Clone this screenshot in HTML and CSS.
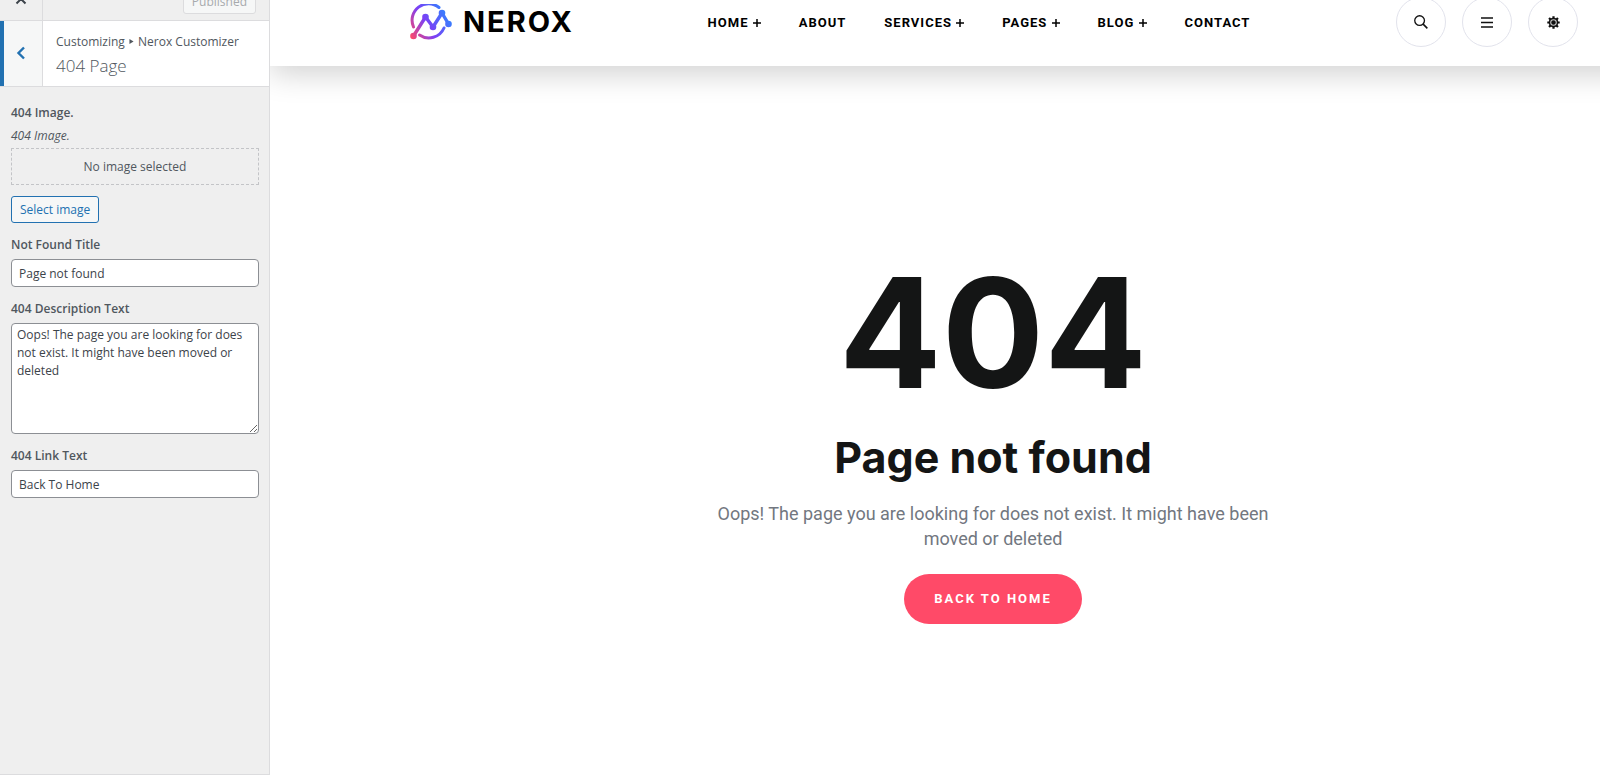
FILE: index.html
```html
<!DOCTYPE html>
<html lang="en">
<head>
<meta charset="utf-8">
<title>Customize: 404 Page</title>
<link rel="stylesheet" href="styles.css">
</head>
<body>
<div class="app">
  <aside class="controls">
    <div class="topbar">
      <button class="close" aria-label="Close">
        <svg width="12" height="12" viewBox="0 0 12 12"><path d="M1.500 1.500l9 9M10.500 1.500l-9 9" stroke="currentColor" stroke-width="2"/></svg>
      </button>
      <button class="published" disabled>Published</button>
    </div>
    <div class="section-head">
      <button class="back" aria-label="Back">
        <svg width="10" height="14" viewBox="0 0 10 14"><path d="M8 1.500L2.500 7 8 12.500" fill="none" stroke="currentColor" stroke-width="2.400"/></svg>
      </button>
      <div class="section-title">
        <span class="crumbs">Customizing
          <svg class="crumb-arrow" width="5" height="5" viewBox="0 0 5 6"><path d="M0 0l5 3-5 3z" fill="currentColor"/></svg>
          Nerox Customizer</span>
        <h1 class="section-name">404 Page</h1>
      </div>
    </div>
    <form class="fields">
      <div class="field">
        <span class="label">404 Image.</span>
        <span class="hint">404 Image.</span>
        <div class="placeholder">No image selected</div>
        <button type="button" class="select-image">Select image</button>
      </div>
      <div class="field">
        <label class="label" for="nf-title">Not Found Title</label>
        <input class="input" id="nf-title" type="text" value="Page not found">
      </div>
      <div class="field">
        <label class="label" for="nf-text">404 Description Text</label>
        <textarea class="input area" id="nf-text">Oops! The page you are looking for does not exist. It might have been moved or deleted</textarea>
      </div>
      <div class="field">
        <label class="label" for="nf-link">404 Link Text</label>
        <input class="input" id="nf-link" type="text" value="Back To Home">
      </div>
    </form>
    <div class="footer"></div>
  </aside>
  <div class="preview">
    <header class="site-header">
      <a class="logo" href="#">
        <svg width="42" height="36" viewBox="0 0 42 36">
          <defs><linearGradient id="g" gradientUnits="userSpaceOnUse" x1="1" y1="34" x2="40" y2="10"><stop offset="0" stop-color="#ff4968"/><stop offset=".45" stop-color="#7c3ff5"/><stop offset="1" stop-color="#2f86ff"/></linearGradient></defs>
          <g fill="none" stroke="url(#g)" stroke-width="3" stroke-linecap="round" stroke-linejoin="round">
            <path d="M3.500 23A16.500 16.500 0 0 1 29 3.500"/>
            <path d="M9.500 31A16.500 16.500 0 0 0 34 24"/>
            <path d="M3.500 32L15.500 13 23 23 32 9 38.500 20" stroke-width="3.400"/>
          </g>
          <g fill="url(#g)"><circle cx="3.500" cy="32" r="3.300"/><circle cx="15.500" cy="13" r="3.300"/><circle cx="23" cy="23" r="3.300"/><circle cx="32" cy="9" r="3.300"/><circle cx="38.500" cy="20" r="3.300"/></g>
        </svg>
        <span class="brand">NEROX</span>
      </a>
      <nav class="nav">
        <a href="#">HOME <svg class="plus" width="8" height="8" viewBox="0 0 8 8"><path d="M4 0v8M0 4h8"/></svg></a>
        <a href="#">ABOUT</a>
        <a href="#">SERVICES <svg class="plus" width="8" height="8" viewBox="0 0 8 8"><path d="M4 0v8M0 4h8"/></svg></a>
        <a href="#">PAGES <svg class="plus" width="8" height="8" viewBox="0 0 8 8"><path d="M4 0v8M0 4h8"/></svg></a>
        <a href="#">BLOG <svg class="plus" width="8" height="8" viewBox="0 0 8 8"><path d="M4 0v8M0 4h8"/></svg></a>
        <a href="#">CONTACT</a>
      </nav>
      <div class="tools">
        <button class="tool" aria-label="Search"><svg width="14" height="14" viewBox="0 0 15 15" fill="none" stroke="currentColor" stroke-width="1.400"><circle cx="6" cy="6" r="5.200"/><path d="M9.800 9.800l4.500 4.500" stroke-width="1.700"/></svg></button>
        <button class="tool" aria-label="Menu"><svg width="12" height="11" viewBox="0 0 12 11" stroke="currentColor" stroke-width="1.300"><path d="M0 1h12M0 5.500h12M0 10h12"/></svg></button>
        <button class="tool" aria-label="Theme"><svg width="13" height="13" viewBox="0 0 14 14"><path d="M7 .3v13.400M.3 7h13.400M2.200 2.200l9.600 9.600M11.800 2.200l-9.600 9.600" stroke="currentColor" stroke-width="2.400"/><circle cx="7" cy="7" r="5.200" fill="currentColor"/><circle cx="7" cy="7" r="3" fill="none" stroke="#ccc" stroke-width="1.100"/></svg></button>
      </div>
    </header>
    <main class="not-found">
      <div class="code">404</div>
      <h2 class="title">Page not found</h2>
      <p class="text">Oops! The page you are looking for does not exist. It might have been moved or deleted</p>
      <a class="home-link" href="#">BACK TO HOME</a>
    </main>
  </div>
</div>
</body>
</html>
```

FILE: styles.css
```css
* { box-sizing: border-box; }
body { margin: 0; background: #fff; }
a { color: inherit; text-decoration: none; }
button { font-family: inherit; cursor: pointer; }
svg { flex: none; }

.app { display: flex; height: 100vh; overflow: hidden; }

/* Customizer panel */
.controls {
  display: flex;
  flex-direction: column;
  flex: 0 0 270px;
  background: #efefef;
  border-right: 1px solid #dcdcde;
  color: #50575e;
  font-family: "Open Sans", sans-serif;
  font-size: 12px;
}
.topbar {
  display: flex;
  justify-content: space-between;
  align-items: center;
  height: 46px;
  margin-top: -25px;
  padding-right: 13px;
  border-bottom: 1px solid #dcdcde;
}
.close {
  align-self: stretch;
  width: 43px;
  padding: 4px 0 0;
  border: 0;
  border-right: 1px solid #dcdcde;
  background: none;
  color: #3c434a;
}
.published {
  height: 32px;
  padding: 8px 8px 0;
  border: 1px solid #dcdcde;
  border-radius: 3px;
  background: #f6f7f7;
  color: #a7aaad;
  font-size: 12px;
}
.section-head {
  display: flex;
  height: 66px;
  border-bottom: 1px solid #dcdcde;
  background: #fff;
}
.back {
  width: 43px;
  padding: 2px 4px 0 0;
  border: 0;
  border-left: 4px solid #2271b1;
  border-right: 1px solid #dcdcde;
  background: #f6f7f7;
  color: #2271b1;
}
.section-title { padding: 12px 0 0 13px; white-space: nowrap; }
.crumbs { display: block; line-height: 18px; }
.crumb-arrow { margin: 0 1px; vertical-align: 2px; }
.section-name { margin: 3px 0 0; font-size: 17px; font-weight: 300; line-height: 24px; }

.fields { flex: 1; padding: 16px 10px 16px 11px; }
.field { margin-bottom: 12px; }
.label { display: block; margin-bottom: 4px; font-weight: 600; line-height: 20px; }
.hint { display: block; margin-bottom: 3px; font-style: italic; line-height: 18px; }
.placeholder {
  padding: 9px 0;
  border: 1px dashed #c3c4c7;
  line-height: 17px;
  text-align: center;
}
.select-image {
  height: 27px;
  margin-top: 11px;
  padding: 0 8px;
  border: 1px solid #2271b1;
  border-radius: 3px;
  background: #f6f7f7;
  color: #2271b1;
  font-size: 12px;
}
.input {
  display: block;
  width: 100%;
  height: 28px;
  padding: 0 7px;
  border: 1px solid #8c8f94;
  border-radius: 4px;
  background: #fff;
  color: #3c434a;
  font-family: inherit;
  font-size: 12px;
}
.area { height: 111px; padding: 2px 5px; line-height: 18px; resize: vertical; }
.footer { height: 1px; background: #dcdcde; }

/* Site preview */
.preview { flex: 1; min-width: 0; overflow: hidden; font-family: Roboto, sans-serif; }
.site-header {
  display: flex;
  align-items: center;
  justify-content: space-between;
  height: 88px;
  margin: -22px -40px 0 0;
  padding: 0 62px 0 140px;
  box-shadow: 0 8px 30px rgba(0, 0, 0, .18);
}
.logo { display: flex; align-items: center; gap: 11px; }
.brand { color: #000; font: 700 29px/36px Inter, sans-serif; letter-spacing: 2px; }
.nav { display: flex; gap: 38px; margin-right: 12px; color: #000; font-size: 13px; font-weight: 700; letter-spacing: 1px; white-space: nowrap; }
.plus { fill: none; stroke: currentColor; stroke-width: 1.500; }
.tools { display: flex; gap: 16px; }
.tool {
  display: grid;
  place-items: center;
  width: 50px;
  height: 50px;
  padding: 0;
  border: 1px solid #e2e3ec;
  border-radius: 50%;
  background: #fff;
  color: #111;
}
.not-found {
  display: flex;
  flex-direction: column;
  align-items: center;
  padding: 187px 0 0 116px;
  color: #141515;
  text-align: center;
}
.code { font: 700 152px/160px Inter, sans-serif; }
.title { margin: 18px 0 0; font: 700 43px/52px Inter, sans-serif; }
.text { max-width: 570px; margin: 18px 0 23px; color: #727780; font-size: 18px; line-height: 25px; }
.home-link {
  padding: 0 30px;
  border-radius: 25px;
  background: #ff4a68;
  color: #fff;
  font-size: 13px;
  font-weight: 700;
  letter-spacing: 2px;
  line-height: 50px;
}
```
